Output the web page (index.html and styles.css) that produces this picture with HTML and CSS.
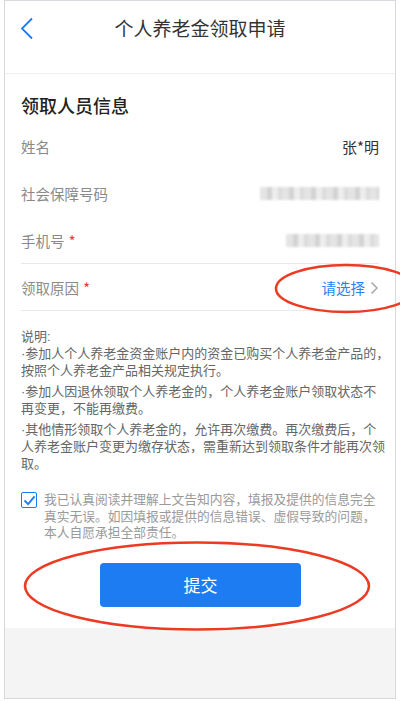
FILE: index.html
```html
<!DOCTYPE html>
<html lang="zh-CN">
<head>
    <meta charset="UTF-8">
    <meta name="viewport" content="width=device-width, initial-scale=1.0">
    <title>个人养老金领取申请</title>
    <link rel="stylesheet" href="styles.css">
</head>
<body>
    <div class="phone">
        <header class="top-bar">
            <svg class="back" width="14" height="24" viewBox="0 0 14 24">
                <polyline points="12,1.5 2,11.5 12,21.5" fill="none" stroke="#1b7cf4" stroke-width="1.8"/>
            </svg>
            <h1>个人养老金领取申请</h1>
        </header>

        <section class="form-card">
            <h2>领取人员信息</h2>
            <div class="row">
                <span class="label">姓名</span>
                <span class="value">张*明</span>
            </div>
            <div class="row">
                <span class="label">社会保障号码</span>
                <span class="masked masked-long"></span>
            </div>
            <div class="row line">
                <span class="label">手机号 <i class="req">*</i></span>
                <span class="masked masked-short"></span>
            </div>
            <div class="row line">
                <span class="label">领取原因 <i class="req">*</i></span>
                <span class="picker">请选择
                    <svg width="9" height="14" viewBox="0 0 9 14">
                        <polyline points="1.5,1.5 7,7 1.5,12.5" fill="none" stroke="#a8a8a8" stroke-width="1.5"/>
                    </svg>
                </span>
            </div>

            <div class="notice">
                <p>说明:</p>
                <p>·参加人个人养老金资金账户内的资金已购买个人养老金产品的，<br>按照个人养老金产品相关规定执行。</p>
                <p>·参加人因退休领取个人养老金的，个人养老金账户领取状态不<br>再变更，不能再缴费。</p>
                <p>·其他情形领取个人养老金的，允许再次缴费。再次缴费后，个<br>人养老金账户变更为缴存状态，需重新达到领取条件才能再次领<br>取。</p>
            </div>

            <label class="agree">
                <span class="check">
                    <svg width="13" height="11" viewBox="0 0 14 12">
                        <polyline points="1.5,6 5.5,10 12.5,1.5" fill="none" stroke="#1b7cf4" stroke-width="2"/>
                    </svg>
                </span>
                <span class="agree-text">我已认真阅读并理解上文告知内容，填报及提供的信息完全真实无误。如因填报或提供的信息错误、虚假导致的问题，本人自愿承担全部责任。</span>
            </label>

            <div class="actions">
                <button type="button">提交</button>
            </div>
        </section>

        <div class="footer-space"></div>
    </div>

    <!-- 手绘的红色标注圈 -->
    <svg class="marks" width="400" height="702" viewBox="0 0 400 702">
        <ellipse cx="346" cy="288.5" rx="70" ry="23.5" fill="none" stroke="#ec3b22" stroke-width="2.6"/>
        <ellipse cx="197" cy="586" rx="172" ry="43.5" fill="none" stroke="#ec3b22" stroke-width="2.6"/>
    </svg>
</body>
</html>
```

FILE: styles.css
```css
/* 全体 */
body {
    margin: 0;
    background-color: #fff;
    font-family: "Noto Sans CJK SC", "Noto Sans", sans-serif;
    color: #333;
}

.phone {
    margin: 0 4px;
    height: 697px;
    border: 1px solid #d6d9dd;
    display: flex;
    flex-direction: column;
    background-color: #fff;
}

/* 顶部栏 */
.top-bar {
    position: relative;
    height: 72px;
    border-bottom: 1px solid #eeeff1;
}

.top-bar h1 {
    margin: 0;
    padding-top: 13px;
    text-align: center;
    font-size: 19px;
    line-height: 28px;
    font-weight: 400;
    color: #333;
}

.back {
    position: absolute;
    left: 15px;
    top: 16px;
}

/* 表单 */
.form-card {
    padding: 0 16px 21px;
}

.form-card h2 {
    margin: 0;
    padding: 19px 0 5px;
    font-size: 18px;
    line-height: 25px;
    font-weight: 500;
    color: #222;
}

.row {
    height: 47px;
    box-sizing: border-box;
    display: flex;
    align-items: center;
    justify-content: space-between;
}

.row.line {
    border-bottom: 1px solid #e8e9eb;
}

.label {
    font-size: 14.5px;
    color: #8a8a8a;
}

.req {
    font-style: normal;
    color: #f2342c;
    margin-left: 1px;
}

.value {
    font-size: 15px;
    color: #333;
}

.masked {
    height: 13px;
    background:
        repeating-linear-gradient(90deg, #e2e2e2 0 7px, #cfcfcf 7px 12px, #ececec 12px 18px, #d8d8d8 18px 22px);
    filter: blur(0.8px);
    opacity: 0.9;
}

.masked-long {
    width: 119px;
}

.masked-short {
    width: 93px;
}

.picker {
    display: flex;
    align-items: center;
    gap: 5px;
    font-size: 14.5px;
    color: #2a7ff2;
    margin-top: 1px;
}

/* 说明 */
.notice {
    padding-top: 17px;
    font-family: "Liberation Sans", "Noto Sans CJK SC", sans-serif;
    font-size: 13px;
    line-height: 17px;
    color: #666;
}

.notice p {
    margin: 0 0 4px;
    white-space: nowrap;
}

.notice p:first-child {
    margin-bottom: 0;
}

/* 同意条款 */
.agree {
    display: flex;
    gap: 7px;
    margin-top: 19px;
}

.check {
    flex: none;
    width: 14px;
    height: 14px;
    margin-top: 1px;
    border: 1.5px solid #1b7cf4;
    border-radius: 2px;
    display: flex;
    align-items: center;
    justify-content: center;
}

.agree-text {
    font-size: 12.75px;
    line-height: 16.5px;
    color: #9a9a9a;
}

/* 按钮 */
.actions {
    display: flex;
    justify-content: center;
    margin-top: 22px;
}

button {
    width: 201px;
    height: 44px;
    margin-left: 1px;
    border: none;
    border-radius: 4px;
    background-color: #1e7cf3;
    color: #fff;
    font-family: inherit;
    font-size: 17px;
}

.footer-space {
    flex: 1;
    background-color: #f4f4f5;
}

/* 标注 */
.marks {
    position: absolute;
    top: 0;
    left: 0;
    pointer-events: none;
}
```
